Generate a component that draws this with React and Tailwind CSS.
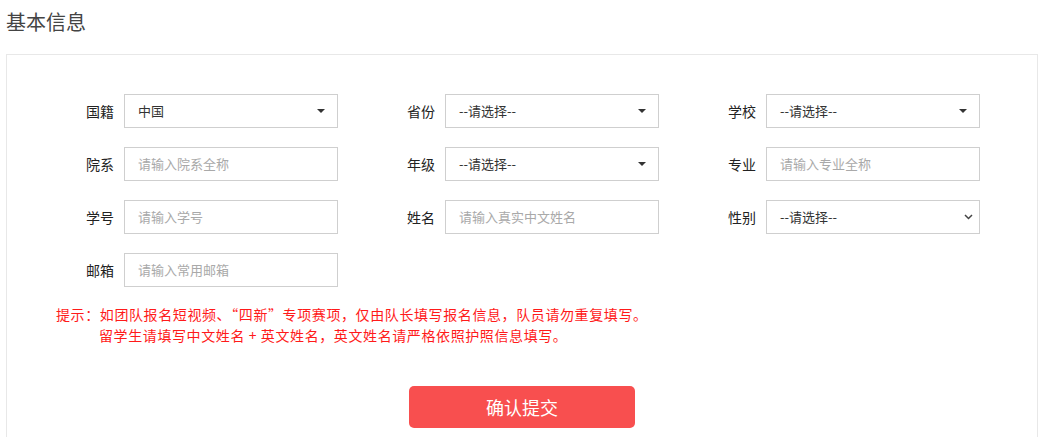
import React from "react";

const font = { fontFamily: '"Noto Sans CJK SC", "Noto Sans", sans-serif' };

function Caret() {
  return (
    <svg width="8" height="4" viewBox="0 0 8 4" className="shrink-0">
      <path d="M0 0 L8 0 L4 4 Z" fill="#333" />
    </svg>
  );
}

function Chevron() {
  return (
    <svg width="9" height="6" viewBox="0 0 9 6" className="shrink-0">
      <path d="M1 1 L4.5 4.5 L8 1" fill="none" stroke="#444" strokeWidth="1.5" />
    </svg>
  );
}

function Field({ label, value, placeholder, kind }) {
  return (
    <div className="flex items-center">
      <label className="w-[70px] pr-[10px] text-right text-[14px] text-[#222]">{label}</label>
      <div className="flex h-[34px] w-[214px] items-center justify-between border border-[#cfcfcf] bg-white pl-[13px] text-[13px]">
        {placeholder ? (
          <span className="text-[#a9a9a9]">{placeholder}</span>
        ) : (
          <span className="text-[#333]">{value}</span>
        )}
        {kind === "caret" && (
          <span className="mr-[12px] flex">
            <Caret />
          </span>
        )}
        {kind === "native" && (
          <span className="mr-[6px] flex">
            <Chevron />
          </span>
        )}
      </div>
    </div>
  );
}

const fields = [
  { label: "国籍", value: "中国", kind: "caret" },
  { label: "省份", value: "--请选择--", kind: "caret" },
  { label: "学校", value: "--请选择--", kind: "caret" },
  { label: "院系", placeholder: "请输入院系全称" },
  { label: "年级", value: "--请选择--", kind: "caret" },
  { label: "专业", placeholder: "请输入专业全称" },
  { label: "学号", placeholder: "请输入学号" },
  { label: "姓名", placeholder: "请输入真实中文姓名" },
  { label: "性别", value: "--请选择--", kind: "native" },
  { label: "邮箱", placeholder: "请输入常用邮箱" },
];

export default function App() {
  return (
    <div className="h-[437px] overflow-hidden bg-white pl-[6px] pr-[6px]" style={font}>
      <h2 className="pt-[9px] text-[20px] leading-[26px] text-[#444]">基本信息</h2>

      {/* 表单面板 */}
      <div className="mt-[19px] h-[420px] w-[1032px] border border-[#e8e8e8] bg-white pt-[39px]">
        <div className="grid grid-cols-[repeat(3,321px)] gap-y-[19px] pl-[47px]">
          {fields.map((f) => (
            <Field key={f.label} {...f} />
          ))}
        </div>

        <div className="mt-[17px] pl-[49px] text-[14px] leading-[21px] tracking-[0.6px] text-[#ff1a1a]">
          <p>提示：如团队报名短视频、“四新”专项赛项，仅由队长填写报名信息，队员请勿重复填写。</p>
          <p className="pl-[43px]">留学生请填写中文姓名 + 英文姓名，英文姓名请严格依照护照信息填写。</p>
        </div>

        <div className="mt-[40px] flex justify-center">
          <button className="h-[42px] w-[226px] rounded-[5px] bg-[#f84f4f] text-[18px] text-white">
            确认提交
          </button>
        </div>
      </div>
    </div>
  );
}
